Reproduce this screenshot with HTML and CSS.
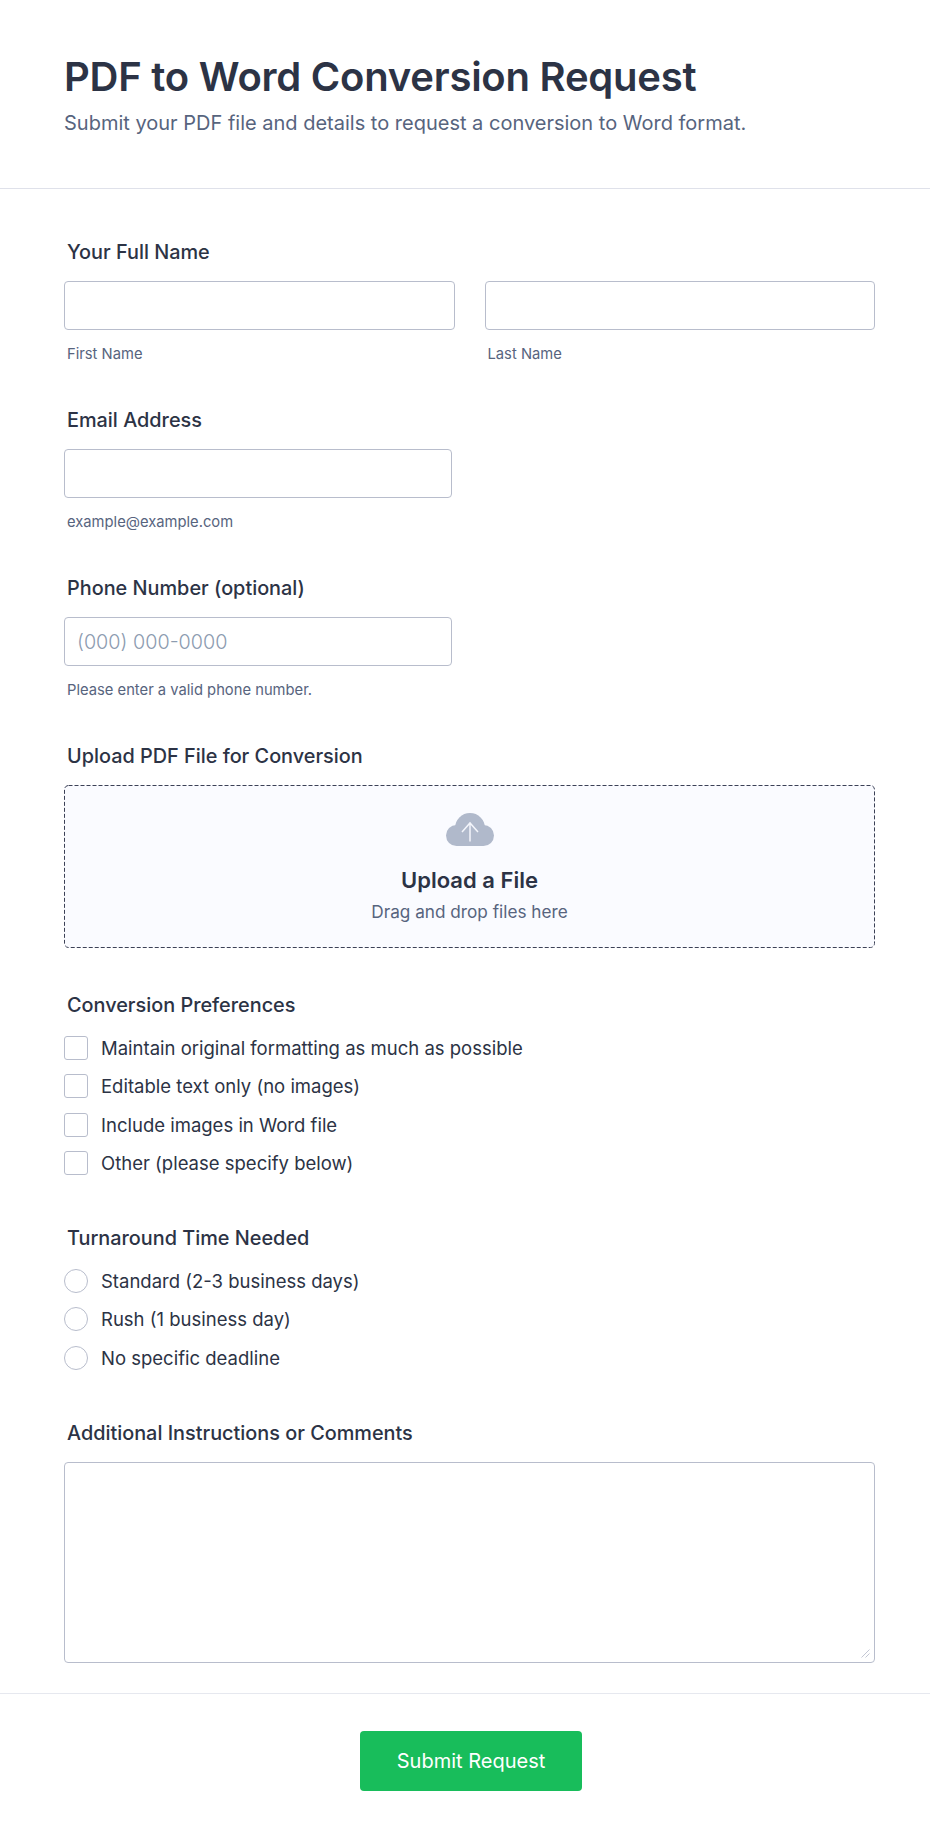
FILE: index.html
```html
<!DOCTYPE html>
<html lang="en">
<head>
  <meta charset="UTF-8" />
  <meta name="viewport" content="width=device-width, initial-scale=1.0" />
  <title>PDF to Word Conversion Request</title>
  <link rel="stylesheet" href="styles.css">
</head>
<body>
  <form class="form-card">
    <header class="form-header">
      <h1>PDF to Word Conversion Request</h1>
      <p>Submit your PDF file and details to request a conversion to Word format.</p>
    </header>

    <div class="form-body">
      <div class="field">
        <label class="field-label">Your Full Name</label>
        <div class="name-row">
          <div class="name-col">
            <input type="text" class="text-input">
            <span class="sublabel">First Name</span>
          </div>
          <div class="name-col">
            <input type="text" class="text-input">
            <span class="sublabel">Last Name</span>
          </div>
        </div>
      </div>

      <div class="field">
        <label class="field-label">Email Address</label>
        <input type="text" class="text-input half">
        <span class="sublabel">example@example.com</span>
      </div>

      <div class="field">
        <label class="field-label">Phone Number (optional)</label>
        <input type="text" class="text-input half" placeholder="(000) 000-0000">
        <span class="sublabel">Please enter a valid phone number.</span>
      </div>

      <div class="field">
        <label class="field-label">Upload PDF File for Conversion</label>
        <div class="dropzone">
          <svg class="dash-border" width="100%" height="100%">
            <rect x="0.5" y="0.5" rx="4" ry="4"/>
          </svg>
          <svg class="cloud-icon" width="48" height="33" viewBox="0 0 48 33">
            <g class="cloud">
              <circle cx="24" cy="15" r="15"/>
              <circle cx="10.500" cy="22.500" r="10.500"/>
              <circle cx="37.500" cy="22.500" r="10.500"/>
              <rect x="10.500" y="18" width="27" height="15"/>
            </g>
            <path class="arrow" d="M24 28.500V10M16 19L24 10L32 19"/>
          </svg>
          <div class="drop-title">Upload a File</div>
          <div class="drop-text">Drag and drop files here</div>
        </div>
      </div>

      <div class="field choice">
        <label class="field-label">Conversion Preferences</label>
        <div class="options">
          <label class="option"><input type="checkbox"><span>Maintain original formatting as much as possible</span></label>
          <label class="option"><input type="checkbox"><span>Editable text only (no images)</span></label>
          <label class="option"><input type="checkbox"><span>Include images in Word file</span></label>
          <label class="option"><input type="checkbox"><span>Other (please specify below)</span></label>
        </div>
      </div>

      <div class="field choice">
        <label class="field-label">Turnaround Time Needed</label>
        <div class="options">
          <label class="option"><input type="radio" name="turnaround"><span>Standard (2-3 business days)</span></label>
          <label class="option"><input type="radio" name="turnaround"><span>Rush (1 business day)</span></label>
          <label class="option"><input type="radio" name="turnaround"><span>No specific deadline</span></label>
        </div>
      </div>

      <div class="field last">
        <label class="field-label">Additional Instructions or Comments</label>
        <div class="comments-wrap">
          <textarea class="comments"></textarea>
          <svg class="resize-handle" width="9" height="9" viewBox="0 0 9 9">
            <path d="M0.500 8.500L8.500 0.500M4.500 8.500L8.500 4.500"/>
          </svg>
        </div>
      </div>
    </div>

    <footer class="form-footer">
      <button type="button" class="submit-btn">Submit Request</button>
    </footer>
  </form>
</body>
</html>
```

FILE: styles.css
```css
* {
  box-sizing: border-box;
  margin: 0;
  padding: 0;
}
body {
  font-family: Inter, "Liberation Sans", sans-serif;
  background-color: #fff;
  color: #2c3345;
}
.form-header {
  padding: 51px 64px 0;
  height: 189px;
  border-bottom: 1px solid #dfe1ea;
}
h1 {
  font-size: 40px;
  font-weight: 600;
  line-height: 52px;
  letter-spacing: -0.23px;
  margin-bottom: 6px;
}
.form-header p {
  font-size: 20px;
  line-height: 28px;
  color: #57647e;
}
.form-body {
  padding: 50px 55px 0 64px;
}
.field {
  margin-bottom: 44px;
}
.field.choice {
  margin-bottom: 50px;
}
.field.last {
  margin-bottom: 30px;
}
.field-label {
  display: block;
  font-size: 19.85px;
  font-weight: 500;
  line-height: 24px;
  padding: 1px 0 0 3px;
  margin-bottom: 17px;
}
.name-row {
  display: flex;
  gap: 30px;
}
.name-col {
  flex: 1;
}
.text-input {
  display: block;
  width: 100%;
  height: 49px;
  padding: 0 12px;
  font-family: inherit;
  font-size: 19.8px;
  color: #2c3345;
  background: #fff;
  border: 1px solid #b8bdcc;
  border-radius: 4px;
}
.text-input.half {
  width: 388px;
}
.text-input::placeholder {
  color: #8c9bb0;
  font-weight: 300;
}
.sublabel {
  display: block;
  font-size: 14.75px;
  line-height: 18px;
  color: #57647e;
  padding-left: 3px;
  margin-top: 15px;
}
.dropzone {
  position: relative;
  display: flex;
  flex-direction: column;
  align-items: center;
  height: 163px;
  padding-top: 28px;
  background: #fafbff;
  border-radius: 5px;
}
.dash-border {
  position: absolute;
  top: 0;
  left: 0;
}
.dash-border rect {
  width: calc(100% - 1px);
  height: calc(100% - 1px);
  fill: none;
  stroke: #3c4156;
  stroke-width: 1;
  stroke-dasharray: 4 2;
}
.cloud-icon {
  display: block;
}
.cloud {
  fill: #b0b9cb;
}
.arrow {
  fill: none;
  stroke: #f3f5fb;
  stroke-width: 1.5;
}
.drop-title {
  font-size: 22px;
  font-weight: 600;
  line-height: 28px;
  margin-top: 20px;
}
.drop-text {
  font-size: 17.2px;
  line-height: 22px;
  color: #57647e;
  margin-top: 7px;
}
.options {
  display: flex;
  flex-direction: column;
  gap: 14.33px;
  padding-top: 2px;
}
.option {
  display: flex;
  align-items: center;
  height: 24px;
  font-size: 18.5px;
}
.option input {
  appearance: none;
  width: 24px;
  height: 24px;
  margin-right: 13px;
  background: #fff;
  border: 1px solid #b8bdcc;
  border-radius: 3px;
}
.option input[type="radio"] {
  border-radius: 50%;
}
.comments-wrap {
  position: relative;
}
.comments {
  display: block;
  width: 100%;
  height: 201px;
  background: #fff;
  border: 1px solid #b8bdcc;
  border-radius: 4px;
  resize: none;
}
.resize-handle {
  position: absolute;
  right: 5px;
  bottom: 5px;
}
.resize-handle path {
  fill: none;
  stroke: #c3c7d4;
  stroke-width: 1;
}
.form-footer {
  display: flex;
  justify-content: center;
  padding: 37px 0 0 12px;
  border-top: 1px solid #e6e8ef;
}
.submit-btn {
  width: 222px;
  height: 60px;
  font-family: inherit;
  font-size: 20px;
  font-weight: 400;
  color: #fff;
  background-color: #18bd5b;
  border: none;
  border-radius: 4px;
  cursor: pointer;
}
```
